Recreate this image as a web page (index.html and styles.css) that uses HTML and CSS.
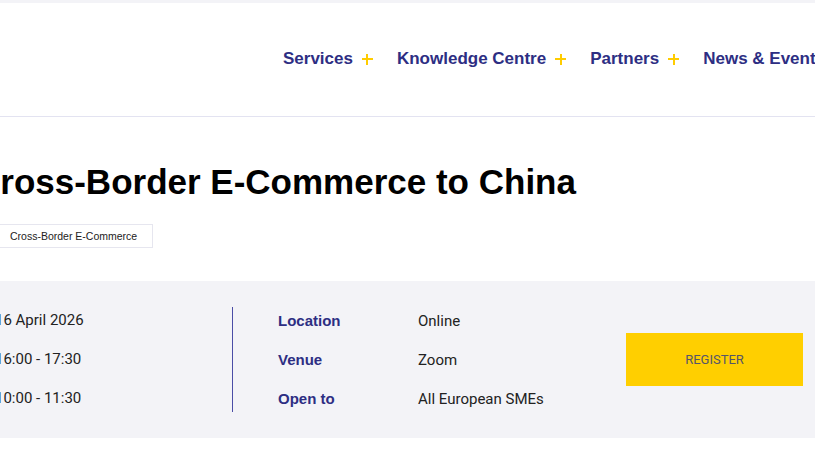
FILE: index.html
```html
<!DOCTYPE html>
<html lang="en">
<head>
<meta charset="utf-8">
<title>Cross-Border E-Commerce to China</title>
<link rel="stylesheet" href="styles.css">
</head>
<body>
<div class="topbar"></div>
<header class="site-header">
  <nav class="main-nav">
    <a class="nav-item" href="#">Services<span class="plus"></span></a>
    <a class="nav-item" href="#">Knowledge Centre<span class="plus"></span></a>
    <a class="nav-item" href="#">Partners<span class="plus"></span></a>
    <a class="nav-item" href="#">News &amp; Events<span class="plus"></span></a>
  </nav>
</header>
<main>
  <section class="event-head">
    <h1 class="title">Cross-Border E-Commerce to China</h1>
    <div class="tags"><span class="tag">Cross-Border E-Commerce</span></div>
  </section>
  <section class="panel">
    <div class="panel-inner">
      <div class="col-dates">
        <div class="row">16 April 2026</div>
        <div class="row">16:00 - 17:30</div>
        <div class="row">10:00 - 11:30</div>
      </div>
      <div class="divider"></div>
      <div class="col-info">
        <div class="label">Location</div><div class="value">Online</div>
        <div class="label">Venue</div><div class="value">Zoom</div>
        <div class="label">Open to</div><div class="value">All European SMEs</div>
      </div>
      <a class="register" href="#">REGISTER</a>
    </div>
  </section>
</main>
</body>
</html>
```
FILE: styles.css
```css
html, body {
  margin: 0;
  padding: 0;
  background: #ffffff;
  overflow: hidden;
}
body {
  width: 815px;
  height: 455px;
  font-family: "Liberation Sans", Arial, sans-serif;
  color: #111111;
}
.topbar {
  height: 3px;
  background: #f3f3f7;
}
.site-header {
  height: 113px;
  border-bottom: 1px solid #e3e3f1;
  display: flex;
  align-items: center;
  overflow: hidden;
}
.main-nav {
  display: flex;
  align-items: center;
  padding-left: 283px;
  padding-bottom: 1px;
  white-space: nowrap;
}
.nav-item {
  display: flex;
  align-items: center;
  font-size: 17px;
  font-weight: bold;
  color: #2d2e83;
  text-decoration: none;
  margin-right: 24px;
}
.plus {
  position: relative;
  display: inline-block;
  width: 11px;
  height: 11px;
  margin-left: 9px;
}
.plus::before,
.plus::after {
  content: "";
  position: absolute;
  background: #ffcc00;
}
.plus::before {
  left: 0;
  top: 4.5px;
  width: 11px;
  height: 2px;
}
.plus::after {
  top: 0;
  left: 4.5px;
  width: 2px;
  height: 11px;
}
.event-head {
  margin-left: -25px;
}
.title {
  margin: 44px 0 0;
  font-size: 35px;
  line-height: 42px;
  font-weight: bold;
  color: #000000;
  white-space: nowrap;
}
.tags {
  margin-top: 21px;
  margin-left: 19px;
  display: flex;
}
.tag {
  display: inline-block;
  height: 22px;
  line-height: 22px;
  padding: 0 15px;
  border: 1px solid #e6e6ef;
  font-size: 10.5px;
  color: #222222;
}
.panel {
  margin-top: 33px;
  background: #f3f3f7;
  padding: 20px 0;
}
.panel-inner {
  display: flex;
  align-items: center;
  margin-left: -5px;
  height: 117px;
}
.col-dates {
  width: 237px;
  font-family: Roboto, "Liberation Sans", sans-serif;
  font-size: 15px;
  color: #222222;
}
.row {
  line-height: 39px;
}
.divider {
  width: 1px;
  height: 105px;
  background: #4b4da6;
}
.col-info {
  margin-left: 45px;
  width: 348px;
  display: grid;
  grid-template-columns: 140px 208px;
  grid-auto-rows: 39px;
  align-items: center;
}
.label {
  font-size: 15px;
  font-weight: bold;
  color: #2d2e83;
}
.value {
  font-family: Roboto, "Liberation Sans", sans-serif;
  font-size: 15px;
  color: #222222;
}
.register {
  width: 177px;
  height: 53px;
  background: #ffcf00;
  display: flex;
  align-items: center;
  justify-content: center;
  font-family: Roboto, "Liberation Sans", sans-serif;
  font-size: 13px;
  color: #55556a;
  text-decoration: none;
}
```
